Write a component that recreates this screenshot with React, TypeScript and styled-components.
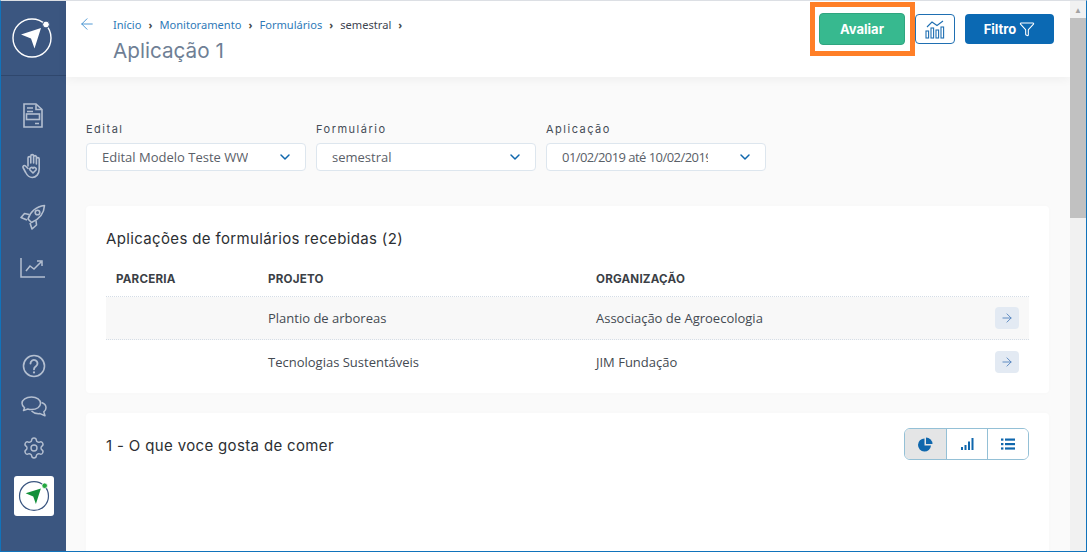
import React from "react";
import styled, { createGlobalStyle } from "styled-components";
import { ChevronDown, ArrowLeft, ArrowRight, Filter, Settings } from "lucide-react";

const Global = createGlobalStyle`
  html, body { margin: 0; padding: 0; height: 100%; overflow: hidden; background: #fff; }
  #root { height: 100%; }
  * { box-sizing: border-box; }
`;

const Frame = styled.div`
  width: 1087px;
  height: 552px;
  display: flex;
  overflow: hidden;
  border-top: 1px solid #dcdfe4;
  border-left: 1px solid #1173bb;
  border-right: 1px solid #1173bb;
  border-bottom: 1px solid #1173bb;
  font-family: "Open Sans", "Liberation Sans", sans-serif;
`;

const Sidebar = styled.aside`
  width: 65px;
  flex: none;
  background: #3b5680;
  display: flex;
  flex-direction: column;
  align-items: center;
`;

const LogoBlock = styled.div`
  width: 100%;
  height: 75px;
  flex: none;
  border-bottom: 1px solid #2f476d;
  display: flex;
  align-items: center;
  justify-content: center;
  padding-right: 4px;
`;

const NavGroup = styled.nav`
  display: flex;
  flex-direction: column;
  align-items: center;
  gap: 13px;
  margin-top: 20px;
  padding-right: 2px;
  color: #b4bfd0;
`;

const NavSlot = styled.div`
  width: 38px;
  height: 38px;
  display: flex;
  align-items: center;
  justify-content: center;
`;

const BottomGroup = styled.div`
  margin-top: auto;
  display: flex;
  flex-direction: column;
  align-items: center;
  gap: 5px;
  padding: 0 0 35px 1px;
  color: #b4bfd0;
`;

const BottomSlot = styled.div`
  width: 36px;
  height: 36px;
  display: flex;
  align-items: center;
  justify-content: center;
`;

const BrandTile = styled.div`
  width: 40px;
  height: 40px;
  margin-top: 5px;
  background: #fff;
  border-radius: 3px;
  display: flex;
  align-items: center;
  justify-content: center;
`;

const Page = styled.div`
  flex: 1;
  min-width: 0;
  display: flex;
  flex-direction: column;
  background: #fafafa;
`;

const Header = styled.header`
  height: 76px;
  flex: none;
  background: #fff;
  box-shadow: 0 2px 10px rgba(0, 0, 0, 0.05);
  display: flex;
  justify-content: space-between;
  padding: 13px 16px 0 12px;
`;

const HeaderLeft = styled.div`
  display: flex;
  gap: 17px;
`;

const BackLink = styled.div`
  color: #3f8fd0;
  height: 20px;
  display: flex;
  align-items: center;
`;

const TitleBlock = styled.div`
  display: flex;
  flex-direction: column;
  gap: 3px;
`;

const Crumbs = styled.div`
  display: flex;
  align-items: center;
  gap: 7px;
  height: 21px;
  font-size: 11.1px;
  font-family: "Noto Sans", sans-serif;
`;

const Crumb = styled.span<{ $current?: boolean }>`
  color: ${(p) => (p.$current ? "#3d4450" : "#2f7ab8")};
`;

const CrumbSep = styled.span`
  color: #444;
  font-size: 11px;
  font-weight: 700;
`;

const Title = styled.h1`
  margin: 0;
  font-family: "Inter", sans-serif;
  font-weight: 400;
  font-size: 20.7px;
  line-height: 26px;
  color: #6f7f95;
`;

const HeaderActions = styled.div`
  display: flex;
  align-items: flex-start;
  gap: 10px;
`;

const Highlighted = styled.div`
  position: relative;
  margin-top: -1px;
`;

const HighlightRing = styled.div`
  position: absolute;
  left: -9px;
  top: -11px;
  width: 105px;
  height: 54px;
  border: 5px solid #ff7f27;
  pointer-events: none;
`;

const PrimaryButton = styled.button<{ $color: string; $width: number }>`
  width: ${(p) => p.$width}px;
  height: 30px;
  border: none;
  border-radius: 4px;
  background: ${(p) => p.$color};
  color: #fff;
  font-family: "Inter", sans-serif;
  font-size: 13px;
  font-weight: 700;
  display: flex;
  align-items: center;
  justify-content: center;
  gap: 3px;
`;

const EvaluateButton = styled(PrimaryButton)`
  height: 32px;
  border: 1px solid #2fa57f;
`;

const IconButton = styled.button`
  width: 40px;
  height: 30px;
  padding: 0;
  background: #fff;
  border: 1px solid #1f6fb2;
  border-radius: 4px;
  color: #1f6fb2;
  display: flex;
  align-items: center;
  justify-content: center;
`;

const Content = styled.main`
  flex: 1;
  min-height: 0;
  overflow: hidden;
  padding: 45px 21px 0 20px;
  display: flex;
  flex-direction: column;
`;

const Filters = styled.div`
  display: flex;
  flex: none;
  gap: 10px;
  margin-bottom: 35px;
`;

const Field = styled.div`
  width: 220px;
  display: flex;
  flex-direction: column;
  gap: 6px;
`;

const FieldLabel = styled.label`
  font-family: "Inter", sans-serif;
  font-size: 11px;
  line-height: 15px;
  letter-spacing: 1.5px;
  color: #454c57;
`;

const Select = styled.div`
  height: 28px;
  background: #fff;
  border: 1px solid #dde6ee;
  border-radius: 4px;
  display: flex;
  align-items: center;
  justify-content: space-between;
  padding: 0 12px 0 15px;
  color: #0f67ad;
`;

const SelectText = styled.span<{ $tight?: boolean }>`
  width: 146px;
  overflow: hidden;
  white-space: nowrap;
  font-size: 13px;
  letter-spacing: ${(p) => (p.$tight ? "-0.55px" : "0")};
  color: #5a6068;
`;

const Card = styled.section`
  flex: none;
  background: #fff;
  border-radius: 4px;
  padding: 0 20px;
  box-shadow: 0 0 6px rgba(0, 0, 0, 0.015);
`;

const TableCard = styled(Card)`
  height: 187px;
  padding-top: 23px;
  margin-bottom: 20px;
`;

const CardTitle = styled.h2`
  margin: 0;
  font-family: "Inter", sans-serif;
  font-weight: 400;
  font-size: 15px;
  letter-spacing: 0.35px;
  line-height: 20px;
  color: #2c2f33;
`;

const ChartTitle = styled(CardTitle)`
  margin-top: 4px;
`;

const Row = styled.div<{ $shade?: boolean }>`
  display: grid;
  grid-template-columns: 162px 328px 1fr 34px;
  align-items: center;
  height: 43px;
  background: ${(p) => (p.$shade ? "#f8f8f8" : "transparent")};
  border-bottom: ${(p) => (p.$shade ? "1px dotted #d5dde6" : "none")};
  font-size: 13px;
  color: #444a52;
`;

const HeadRow = styled(Row)`
  margin-top: 9px;
  height: 39px;
  border-bottom: 1px dotted #d5dde6;
`;

const HeadCell = styled.span`
  font-family: "Inter", sans-serif;
  font-weight: 700;
  font-size: 11.6px;
  letter-spacing: 0.2px;
  padding-top: 3px;
  color: #3b3f46;
`;

const PartnerCell = styled(HeadCell)`
  padding-left: 10px;
`;

const RowButton = styled.div`
  width: 24px;
  height: 22px;
  border-radius: 4px;
  background: #e3eaf3;
  color: #4f80bd;
  display: flex;
  align-items: center;
  justify-content: center;
`;

const ChartCard = styled(Card)`
  height: 200px;
  padding-top: 15px;
`;

const ChartHead = styled.div`
  display: flex;
  align-items: center;
  justify-content: space-between;
`;

const Segments = styled.div`
  display: flex;
  height: 32px;
  border: 1px solid #94c0d6;
  border-radius: 6px;
  overflow: hidden;
`;

const Segment = styled.div<{ $active?: boolean }>`
  width: 41px;
  background: ${(p) => (p.$active ? "#e4e5e6" : "#fff")};
  color: #0f67ad;
  display: flex;
  align-items: center;
  justify-content: center;
  & + & { border-left: 1px solid #94c0d6; }
`;

const Scrollbar = styled.div`
  width: 16px;
  flex: none;
  background: #f1f1f1;
  display: flex;
  flex-direction: column;
`;

const ScrollArrow = styled.div`
  height: 17px;
  display: flex;
  align-items: center;
  justify-content: center;
  color: #a3a3a3;
  font-size: 8px;
`;

const ScrollThumb = styled.div`
  height: 200px;
  background: #c1c1c1;
`;

const Logo = ({ ring, arrow, dot }: { ring: string; arrow: string; dot: string }) => (
  <svg width="42" height="42" viewBox="0 0 42 42" fill="none">
    <circle cx="21" cy="21" r="19" stroke={ring} strokeWidth="1.4" />
    <circle cx="35" cy="7.5" r="3.4" fill={dot} stroke="#3b5680" strokeWidth="1" />
    <path d="M10 17.5 L30 11 L23.5 31.5 L20 21.5 Z" fill={arrow} />
  </svg>
);

const FormIcon = () => (
  <svg width="20" height="25" viewBox="0 0 20 25" fill="none" stroke="currentColor" strokeWidth="1.6">
    <path d="M1 1 H13 L19 6.5 V24 H1 Z" />
    <path d="M4 5 H10 M4 8.5 H10 M13 1.5 V6.5 H19 M12 20.5 H16" />
    <rect x="3.5" y="11" width="13" height="5.5" />
  </svg>
);

const HandIcon = () => (
  <svg width="24" height="26" viewBox="0 0 24 26" fill="none" stroke="currentColor" strokeWidth="1.6" strokeLinecap="round" strokeLinejoin="round">
    <path d="M7 13 V5 a1.4 1.4 0 0 1 2.8 0 V10 M9.8 10 V3 a1.4 1.4 0 0 1 2.8 0 V10 M12.6 10 V4 a1.4 1.4 0 0 1 2.8 0 V11 M15.4 11 V6 a1.4 1.4 0 0 1 2.8 0 V16 c0 5-3 8.5-7 8.5 c-3.5 0-5-2-6.5-5 L2 14.5 a1.5 1.5 0 0 1 2.5-1.5 L7 15.5" />
    <path d="M12 20 l-3-3 a1.7 1.7 0 0 1 3-1.6 a1.7 1.7 0 0 1 3 1.6 Z" />
  </svg>
);

const RocketIcon = () => (
  <svg width="26" height="26" viewBox="0 0 26 26" fill="none" stroke="currentColor" strokeWidth="1.6" strokeLinejoin="round">
    <path d="M8 15 C10 8 16 2.5 24.5 1.5 C24 10 18.5 15.5 11.5 18.5 Z" />
    <circle cx="17.5" cy="8.5" r="2.3" />
    <path d="M9 10.5 L4.5 9.5 L1 13.5 L7 16 M16 16.5 L16.5 21 L12 25 L10 19" />
  </svg>
);

const GrowthIcon = () => (
  <svg width="26" height="20" viewBox="0 0 26 20" fill="none" stroke="currentColor" strokeWidth="1.5">
    <path d="M1 0 V19 H25" />
    <path d="M6 13 L10 8 L14 11 L21 4 M17 3 H22 V8" />
  </svg>
);

const HelpIcon = () => (
  <svg width="24" height="24" viewBox="0 0 24 24" fill="none" stroke="currentColor" strokeWidth="1.6" strokeLinecap="round">
    <circle cx="12" cy="12" r="10.5" />
    <path d="M8.5 9.5 a3.5 3.5 0 1 1 5.5 2.8 c-1.4 1-2 1.6-2 3" strokeWidth="1.9" />
    <path d="M12 18.4 v0.1" strokeWidth="2.2" />
  </svg>
);

const ChatIcon = () => (
  <svg width="26" height="22" viewBox="0 0 26 22" fill="none" stroke="currentColor" strokeWidth="1.5" strokeLinejoin="round">
    <path d="M10.5 1 C5 1 1 3.8 1 7.3 C1 9.3 2.2 10.8 3.6 11.8 L2.5 14.6 L6.8 13 C8 13.4 9.2 13.6 10.5 13.6 C16 13.6 19.5 10.8 19.5 7.3 C19.5 3.8 16 1 10.5 1 Z" />
    <path d="M20.5 6.5 C23.4 7.5 25 9.5 25 11.8 C25 13.6 24 15 22.8 15.9 L24 19.8 L19 17.6 C15.5 18 12.5 17 10.5 15" />
  </svg>
);

const StatsIcon = () => (
  <svg width="20" height="20" viewBox="0 0 20 20" fill="none" stroke="currentColor" strokeWidth="1.1">
    <rect x="1" y="12" width="2.6" height="7" />
    <rect x="6" y="9" width="2.6" height="10" />
    <rect x="11" y="11" width="2.6" height="8" />
    <rect x="16" y="8" width="2.6" height="11" />
    <path d="M2 8 L7 3 L12 6.5 L18 2" />
  </svg>
);

const PieIcon = () => (
  <svg width="15" height="15" viewBox="0 0 15 15" fill="currentColor">
    <path d="M6.5 1.5 A6.5 6.5 0 1 0 13 8.5 H6.5 Z" />
    <path d="M8 0.5 A6.5 6.5 0 0 1 14.5 7 H8 Z" />
  </svg>
);

const BarsIcon = () => (
  <svg width="13" height="12" viewBox="0 0 13 12" fill="currentColor">
    <rect x="0" y="9" width="2" height="3" />
    <rect x="3.5" y="7" width="2" height="5" />
    <rect x="7" y="3.5" width="2" height="8.5" />
    <rect x="10.5" y="0" width="2" height="12" />
  </svg>
);

const ListIcon = () => (
  <svg width="14" height="12" viewBox="0 0 14 12" fill="currentColor">
    <rect x="0" y="0.5" width="2.4" height="2.2" />
    <rect x="4" y="0.5" width="10" height="2.2" />
    <rect x="0" y="5" width="2.4" height="2.2" />
    <rect x="4" y="5" width="10" height="2.2" />
    <rect x="0" y="9.4" width="2.4" height="2.2" />
    <rect x="4" y="9.4" width="10" height="2.2" />
  </svg>
);

const filters = [
  { label: "Edital", value: "Edital Modelo Teste WWF", tight: false },
  { label: "Formulário", value: "semestral", tight: false },
  { label: "Aplicação", value: "01/02/2019 até 10/02/2019", tight: true },
];

const rows = [
  { project: "Plantio de arboreas", org: "Associação de Agroecologia", shade: true },
  { project: "Tecnologias Sustentáveis", org: "JIM Fundação", shade: false },
];

export default function App() {
  return (
    <Frame>
      <Global />
      <Sidebar>
        <LogoBlock>
          <Logo ring="#fff" arrow="#fff" dot="#fff" />
        </LogoBlock>
        <NavGroup>
          <NavSlot><FormIcon /></NavSlot>
          <NavSlot><HandIcon /></NavSlot>
          <NavSlot><RocketIcon /></NavSlot>
          <NavSlot><GrowthIcon /></NavSlot>
        </NavGroup>
        <BottomGroup>
          <BottomSlot><HelpIcon /></BottomSlot>
          <BottomSlot><ChatIcon /></BottomSlot>
          <BottomSlot><Settings size={24} strokeWidth={1.4} /></BottomSlot>
          <BrandTile>
            <svg width="32" height="32" viewBox="0 0 42 42" fill="none">
              <circle cx="21" cy="21" r="19" stroke="#3b5680" strokeWidth="1.6" />
              <circle cx="35" cy="7.5" r="3.6" fill="#22a73f" stroke="#fff" strokeWidth="1" />
              <path d="M10 17.5 L30 11 L23.5 31.5 L20 21.5 Z" fill="#13913a" />
            </svg>
          </BrandTile>
        </BottomGroup>
      </Sidebar>

      <Page>
        <Header>
          <HeaderLeft>
            <BackLink><ArrowLeft size={18} strokeWidth={1.2} /></BackLink>
            <TitleBlock>
              <Crumbs>
                <Crumb>Início</Crumb>
                <CrumbSep>›</CrumbSep>
                <Crumb>Monitoramento</Crumb>
                <CrumbSep>›</CrumbSep>
                <Crumb>Formulários</Crumb>
                <CrumbSep>›</CrumbSep>
                <Crumb $current>semestral</Crumb>
                <CrumbSep>›</CrumbSep>
              </Crumbs>
              <Title>Aplicação 1</Title>
            </TitleBlock>
          </HeaderLeft>
          <HeaderActions>
            <Highlighted>
              <EvaluateButton $color="#37b98f" $width={86}>Avaliar</EvaluateButton>
              <HighlightRing />
            </Highlighted>
            <IconButton><StatsIcon /></IconButton>
            <PrimaryButton $color="#0b69b3" $width={89}>
              Filtro <Filter size={16} strokeWidth={1.6} />
            </PrimaryButton>
          </HeaderActions>
        </Header>

        <Content>
          <Filters>
            {filters.map((f) => (
              <Field key={f.label}>
                <FieldLabel>{f.label}</FieldLabel>
                <Select>
                  <SelectText $tight={f.tight}>{f.value}</SelectText>
                  <ChevronDown size={16} strokeWidth={2.2} />
                </Select>
              </Field>
            ))}
          </Filters>

          <TableCard>
            <CardTitle>Aplicações de formulários recebidas (2)</CardTitle>
            <HeadRow>
              <PartnerCell>PARCERIA</PartnerCell>
              <HeadCell>PROJETO</HeadCell>
              <HeadCell>ORGANIZAÇÃO</HeadCell>
              <span />
            </HeadRow>
            {rows.map((r) => (
              <Row key={r.project} $shade={r.shade}>
                <span />
                <span>{r.project}</span>
                <span>{r.org}</span>
                <RowButton><ArrowRight size={14} strokeWidth={1.5} /></RowButton>
              </Row>
            ))}
          </TableCard>

          <ChartCard>
            <ChartHead>
              <ChartTitle>1 - O que voce gosta de comer</ChartTitle>
              <Segments>
                <Segment $active><PieIcon /></Segment>
                <Segment><BarsIcon /></Segment>
                <Segment><ListIcon /></Segment>
              </Segments>
            </ChartHead>
          </ChartCard>
        </Content>
      </Page>

      <Scrollbar>
        <ScrollArrow>▲</ScrollArrow>
        <ScrollThumb />
      </Scrollbar>
    </Frame>
  );
}
